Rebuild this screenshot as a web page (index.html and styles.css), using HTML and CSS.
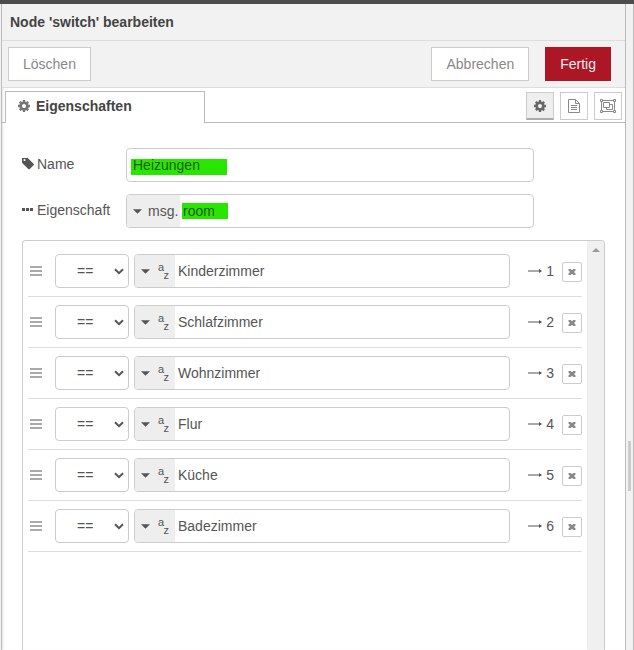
FILE: index.html
```html
<!DOCTYPE html>
<html lang="de">
<head>
<meta charset="utf-8">
<title>Node 'switch' bearbeiten</title>
<link rel="stylesheet" href="styles.css">
</head>
<body>
<svg class="defs" aria-hidden="true">
  <symbol id="cog" viewBox="0 0 1792 1792"><path d="M1152 896q0-106-75-181t-181-75-181 75-75 181 75 181 181 75 181-75 75-181zm512-109v222q0 12-8 23t-20 13l-185 28q-19 54-39 91 35 50 107 138 10 12 10 25t-9 23q-27 37-99 108t-94 71q-12 0-26-9l-138-108q-44 23-91 38-16 136-29 186-7 28-36 28h-222q-14 0-24.500-8.500t-11.500-21.500l-28-184q-49-16-90-37l-141 107q-10 9-25 9-14 0-25-11-126-114-165-168-7-10-7-23 0-12 8-23 15-21 51-66.500t54-70.500q-27-50-41-99l-183-27q-13-2-21-12.500t-8-23.500v-222q0-12 8-23t19-13l186-28q14-46 39-92-40-57-107-138-10-12-10-24 0-10 9-23 26-36 98.500-107.500t94.500-71.500q13 0 26 10l138 107q44-23 91-38 16-136 29-186 7-28 36-28h222q14 0 24.500 8.500t11.500 21.500l28 184q49 16 90 37l142-107q9-9 24-9 13 0 25 10 129 119 165 170 7 8 7 22 0 12-8 23-15 21-51 66.500t-54 70.500q26 50 41 98l183 28q13 2 21 12.500t8 23.500z"/></symbol>
  <symbol id="tag" viewBox="128 192 1536 1536"><path d="M576 448q0-53-37.500-90.500t-90.500-37.500-90.500 37.500-37.500 90.500 37.500 90.500 90.500 37.500 90.500-37.500 37.500-90.500zm1067 576q0 53-37 90l-491 492q-39 37-91 37-53 0-90-37l-715-716q-38-37-64.500-101t-26.500-117v-416q0-52 38-90t90-38h416q53 0 117 26.500t102 64.500l715 714q37 39 37 91z"/></symbol>
  <symbol id="dots" viewBox="0 0 12 12"><path d="M0 4h3v3H0zM4 4h3v3H4zM8 4h3v3H8z"/></symbol>
  <symbol id="file" viewBox="0 0 12 14"><path fill="none" stroke="currentColor" d="M.5.5h7l4 4v9H.5zM7.500.5v4h4M3 6.500h6M3 8.500h6M3 10.500h6"/></symbol>
  <symbol id="group" viewBox="0 0 16 14"><path fill="none" stroke="currentColor" d="M3 1.500h10M3 12.500h10M1.500 3v8M14.500 3v8M.5.5h2v2h-2zM13.500.5h2v2h-2zM.5 11.500h2v2h-2zM13.500 11.500h2v2h-2zM3.500 3.500h6v5h-6zM10 5.500h2.500v5h-6V9"/></symbol>
  <symbol id="caret" viewBox="0 0 8 4"><path d="M0 0h8L4 4z"/></symbol>
  <symbol id="bars" viewBox="0 0 12 10"><path d="M0 0h12v2H0zM0 4h12v2H0zM0 8h12v2H0z"/></symbol>
  <symbol id="chevron" viewBox="0 0 10 7"><path fill="none" stroke="currentColor" stroke-width="2" d="M1 1.200l4 4 4-4"/></symbol>
  <symbol id="arrow" viewBox="0 0 14 6"><path d="M0 2.500h11V1l3 2-3 2V3.500H0z"/></symbol>
  <symbol id="cross" viewBox="0 0 8 8"><path d="M.5 1h2.200L4 2.300 5.300 1h2.200v1.500L6 4l1.500 1.500V7H5.300L4 5.700 2.700 7H.5V5.500L2 4 .5 2.500z"/></symbol>
</svg>
<div class="topbar"></div>
<main class="workspace">
  <section class="tray">
    <h1 class="tray-title">Node 'switch' bearbeiten</h1>
    <div class="toolbar">
      <button class="btn" type="button">Löschen</button>
      <span class="spacer"></span>
      <button class="btn" type="button">Abbrechen</button>
      <button class="btn btn-primary" type="button">Fertig</button>
    </div>
    <nav class="tabs">
      <button class="tab" type="button"><svg class="icon"><use href="#cog"/></svg>Eigenschaften</button>
      <div class="tab-tools">
        <button class="tool tool-active" type="button" aria-label="Eigenschaften"><svg class="icon"><use href="#cog"/></svg></button>
        <button class="tool" type="button" aria-label="Beschreibung"><svg class="icon-file"><use href="#file"/></svg></button>
        <button class="tool" type="button" aria-label="Darstellung"><svg class="icon-group"><use href="#group"/></svg></button>
      </div>
    </nav>
    <form class="form">
      <div class="form-row">
        <label for="name"><svg class="icon-label"><use href="#tag"/></svg>Name</label>
        <div class="field"><input class="text marked-name" id="name" value="Heizungen"></div>
      </div>
      <div class="form-row">
        <label for="prop"><svg class="icon-label"><use href="#dots"/></svg>Eigenschaft</label>
        <div class="field"><button class="type type-msg" type="button"><svg class="caret"><use href="#caret"/></svg>msg.</button><input class="text marked-prop" id="prop" value="room"></div>
      </div>
      <div class="list">
        <ol class="rules">
          <li class="rule"><svg class="handle"><use href="#bars"/></svg><div class="select"><select aria-label="Operator 1"><option>==</option></select><svg><use href="#chevron"/></svg></div><div class="field"><button class="type" type="button" aria-label="Typ 1"><svg class="caret"><use href="#caret"/></svg><span class="az"><span>a</span><span class="z">z</span></span></button><input class="text" aria-label="Wert 1" value="Kinderzimmer"></div><span class="port"><svg><use href="#arrow"/></svg>1</span><button class="remove" type="button" aria-label="Entfernen 1"><svg><use href="#cross"/></svg></button></li>
          <li class="rule"><svg class="handle"><use href="#bars"/></svg><div class="select"><select aria-label="Operator 2"><option>==</option></select><svg><use href="#chevron"/></svg></div><div class="field"><button class="type" type="button" aria-label="Typ 2"><svg class="caret"><use href="#caret"/></svg><span class="az"><span>a</span><span class="z">z</span></span></button><input class="text" aria-label="Wert 2" value="Schlafzimmer"></div><span class="port"><svg><use href="#arrow"/></svg>2</span><button class="remove" type="button" aria-label="Entfernen 2"><svg><use href="#cross"/></svg></button></li>
          <li class="rule"><svg class="handle"><use href="#bars"/></svg><div class="select"><select aria-label="Operator 3"><option>==</option></select><svg><use href="#chevron"/></svg></div><div class="field"><button class="type" type="button" aria-label="Typ 3"><svg class="caret"><use href="#caret"/></svg><span class="az"><span>a</span><span class="z">z</span></span></button><input class="text" aria-label="Wert 3" value="Wohnzimmer"></div><span class="port"><svg><use href="#arrow"/></svg>3</span><button class="remove" type="button" aria-label="Entfernen 3"><svg><use href="#cross"/></svg></button></li>
          <li class="rule"><svg class="handle"><use href="#bars"/></svg><div class="select"><select aria-label="Operator 4"><option>==</option></select><svg><use href="#chevron"/></svg></div><div class="field"><button class="type" type="button" aria-label="Typ 4"><svg class="caret"><use href="#caret"/></svg><span class="az"><span>a</span><span class="z">z</span></span></button><input class="text" aria-label="Wert 4" value="Flur"></div><span class="port"><svg><use href="#arrow"/></svg>4</span><button class="remove" type="button" aria-label="Entfernen 4"><svg><use href="#cross"/></svg></button></li>
          <li class="rule"><svg class="handle"><use href="#bars"/></svg><div class="select"><select aria-label="Operator 5"><option>==</option></select><svg><use href="#chevron"/></svg></div><div class="field"><button class="type" type="button" aria-label="Typ 5"><svg class="caret"><use href="#caret"/></svg><span class="az"><span>a</span><span class="z">z</span></span></button><input class="text" aria-label="Wert 5" value="Küche"></div><span class="port"><svg><use href="#arrow"/></svg>5</span><button class="remove" type="button" aria-label="Entfernen 5"><svg><use href="#cross"/></svg></button></li>
          <li class="rule"><svg class="handle"><use href="#bars"/></svg><div class="select"><select aria-label="Operator 6"><option>==</option></select><svg><use href="#chevron"/></svg></div><div class="field"><button class="type" type="button" aria-label="Typ 6"><svg class="caret"><use href="#caret"/></svg><span class="az"><span>a</span><span class="z">z</span></span></button><input class="text" aria-label="Wert 6" value="Badezimmer"></div><span class="port"><svg><use href="#arrow"/></svg>6</span><button class="remove" type="button" aria-label="Entfernen 6"><svg><use href="#cross"/></svg></button></li>
        </ol>
        <div class="scrollbar"><svg class="scroll-up"><use href="#caret"/></svg></div>
      </div>
    </form>
  </section>
  <div class="separator"><span class="grip"></span></div>
</main>
</body>
</html>
```
FILE: styles.css
```css
* {
  box-sizing: border-box;
}

body {
  margin: 0;
  height: 100vh;
  display: flex;
  flex-direction: column;
  overflow: hidden;
  background: #fff;
  color: #555;
  font: 14px/20px "Liberation Sans", Arial, sans-serif;
}

button, input, select {
  margin: 0;
  padding: 0;
  border: 0;
  border-radius: 0;
  color: inherit;
  font: inherit;
}

svg {
  display: block;
  flex: none;
  fill: currentColor;
}

.defs {
  position: absolute;
  width: 0;
  height: 0;
}

.icon {
  width: 14px;
  height: 14px;
}

.topbar {
  flex: none;
  height: 4px;
  background: #4d4d4d;
}

.workspace {
  flex: 1;
  min-height: 0;
  display: flex;
  padding-left: 1px;
  background: #f2f2f2;
}

.tray {
  flex: 1;
  min-width: 0;
  display: flex;
  flex-direction: column;
  border: solid #bbb;
  border-width: 0 1px;
  background: #fff;
  box-shadow: inset 3px 0 3px -2px #e4e4e4;
}

.tray-title {
  margin: 0;
  padding: 8px;
  border-bottom: 1px solid #ddd;
  background: #f2f2f2;
  color: #444;
  font-size: 14px;
  line-height: 20px;
}

.toolbar {
  display: flex;
  gap: 16px;
  padding: 6px 14px 6px 6px;
  border-bottom: 1px solid #ddd;
  background: #f2f2f2;
}

.spacer {
  flex: 1;
}

.btn {
  height: 34px;
  padding: 0 14px;
  border: 1px solid #ccc;
  background: #fff;
  color: #888;
}

.btn-primary {
  border-color: #ad1625;
  background: #ad1625;
  color: #eee;
}

.tabs {
  display: flex;
  justify-content: space-between;
  height: 35px;
  padding: 3px 3px 0;
  border-bottom: 1px solid #bbb;
}

.tab {
  display: flex;
  align-items: center;
  gap: 5px;
  width: 200px;
  height: 32px;
  padding: 0 11px 3px;
  border: 1px solid #bbb;
  border-bottom: 0;
  background: #fff;
  color: #444;
  font-weight: bold;
}

.tab .icon {
  color: #777;
}

.tab-tools {
  display: flex;
  gap: 6px;
  padding-top: 1px;
}

.tool {
  display: flex;
  align-items: center;
  justify-content: center;
  width: 28px;
  height: 28px;
  border: 1px solid #ccc;
  background: #fff;
  color: #888;
}

.tool-active {
  border-bottom: 2px solid #aaa;
  background: #eee;
  color: #666;
}

.icon-file {
  width: 12px;
  height: 14px;
}

.icon-group {
  width: 16px;
  height: 14px;
}

.form {
  flex: 1;
  min-height: 0;
  display: flex;
  flex-direction: column;
  gap: 12px;
  padding: 25px 20px 0;
}

.form-row {
  display: flex;
}

.form-row label {
  display: flex;
  align-items: center;
  width: 104px;
  gap: 3px;
  padding-bottom: 2px;
}

.icon-label {
  width: 12px;
  height: 12px;
}

.field {
  display: flex;
  height: 34px;
  border: 1px solid #ccc;
  border-radius: 4px;
  background: #fff;
  overflow: hidden;
}

.form-row .field {
  width: 70%;
}

.text {
  flex: 1;
  min-width: 0;
  padding: 0 3px;
  background: none;
  outline: 0;
}

.marked-name {
  padding: 0 6px;
  background: linear-gradient(#29e600, #29e600) no-repeat 4px 10px / 96px 16px;
  color: #285a12;
}

.marked-prop {
  background: linear-gradient(#29e600, #29e600) no-repeat 2px 8px / 46px 16px;
  color: #285a12;
}

.type {
  display: flex;
  align-items: center;
  gap: 8px;
  width: 40px;
  padding-left: 6px;
  background: #eee;
}

.type-msg {
  gap: 6px;
  width: 53px;
}

.caret {
  width: 9px;
  height: 5px;
}

.az {
  display: flex;
  flex-direction: column;
  width: 11px;
  font-size: 11px;
  line-height: 8px;
  text-align: left;
}

.z {
  text-align: right;
}

.list {
  flex: 1;
  min-height: 0;
  display: flex;
  border: 1px solid #ccc;
  border-bottom: 0;
  border-radius: 4px 4px 0 0;
  overflow: hidden;
}

.rules {
  flex: 1;
  margin: 0;
  padding: 5px;
  list-style: none;
}

.rule {
  display: flex;
  align-items: center;
  padding: 8px 0;
  border-bottom: 1px solid #ddd;
}

.handle {
  width: 12px;
  height: 10px;
  margin: 0 13px 0 2px;
  color: #aaa;
}

.select {
  display: grid;
  align-items: center;
  width: 74px;
  height: 34px;
  margin-right: 5px;
  border: 1px solid #ccc;
  border-radius: 4px;
}

.select select {
  grid-area: 1 / 1;
  width: 100%;
  height: 32px;
  padding-left: 21px;
  appearance: none;
  background: none;
}

.select svg {
  grid-area: 1 / 1;
  justify-self: end;
  width: 10px;
  height: 7px;
  margin-right: 4px;
  pointer-events: none;
}

.rule .field {
  flex: 1;
}

.port {
  display: flex;
  align-items: center;
  gap: 4px;
  margin: 0 8px 0 18px;
}

.port svg {
  width: 14px;
  height: 6px;
}

.remove {
  display: flex;
  align-items: center;
  justify-content: center;
  width: 20px;
  height: 20px;
  margin-top: 2px;
  border: 1px solid #ccc;
  border-radius: 2px;
  background: #fff;
  color: #888;
}

.remove svg {
  width: 8px;
  height: 8px;
}

.scrollbar {
  width: 17px;
  padding-top: 7px;
  background: #f0f0f0;
}

.scroll-up {
  width: 8px;
  height: 4px;
  margin: 0 auto;
  color: #999;
  transform: rotate(180deg);
}

.separator {
  width: 8px;
  padding: 437px 2px 0;
  border-right: 1px solid #bbb;
}

.grip {
  display: block;
  width: 3px;
  height: 50px;
  background: #ccc;
}
```
